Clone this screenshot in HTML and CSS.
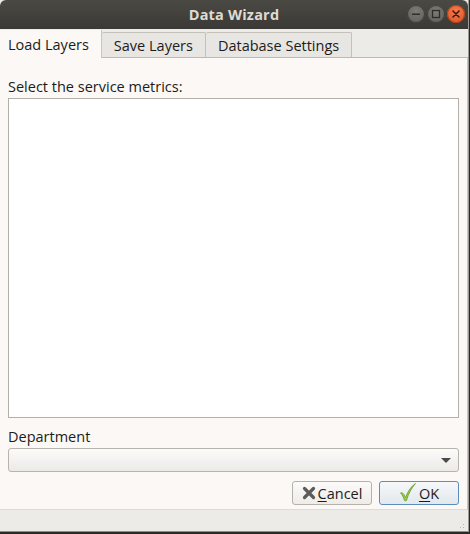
FILE: index.html
```html
<!DOCTYPE html>
<html>
<head>
<meta charset="utf-8">
<link rel="stylesheet" href="styles.css">
</head>
<body>
<div class="window">
  <div class="titlebar">
    <div class="title">Data Wizard</div>
    <div class="controls">
      <span class="ctl ctl-min"><svg width="16" height="16" viewBox="0 0 16 16"><rect x="4" y="7.5" width="8" height="1.5" fill="#2e2d2a"/></svg></span>
      <span class="ctl ctl-max"><svg width="16" height="16" viewBox="0 0 16 16"><rect x="4.5" y="4.5" width="7" height="7" fill="none" stroke="#2e2d2a" stroke-width="1.3"/></svg></span>
      <span class="ctl ctl-close"><svg width="16" height="16" viewBox="0 0 16 16"><path d="M5 5 L11 11 M11 5 L5 11" stroke="#3a1a0e" stroke-width="1.6" stroke-linecap="round"/></svg></span>
    </div>
  </div>
  <div class="tabbar">
    <div class="tab active">Load Layers</div>
    <div class="tab">Save Layers</div>
    <div class="tab">Database Settings</div>
  </div>
  <div class="panel">
    <div class="label label-top">Select the service metrics:</div>
    <div class="listbox"></div>
    <div class="label label-dept">Department</div>
    <div class="combo"><span class="arrow"></span></div>
    <div class="buttons">
      <button class="btn"><svg class="icon" width="14" height="14" viewBox="0 0 14 14"><path d="M2.5 2.5 L11.5 11.5 M11.5 2.5 L2.5 11.5" stroke="#5b5b58" stroke-width="3.2" stroke-linecap="round"/></svg><span><u>C</u>ancel</span></button>
      <button class="btn btn-default"><svg class="icon" width="18" height="20" viewBox="0 0 18 20"><path d="M1.5 11 C3 10 4.5 11 6.5 15.5 C9 9 12 4.5 16.5 1.5 C12.5 6 9.5 11.5 7.5 18.5 C6.5 19 6 19 5.5 18.5 C4.5 15 3 12.5 1.5 11 Z" fill="#9acb4c" stroke="#6a9a2c" stroke-width="0.8"/></svg><span><u>O</u>K</span></button>
    </div>
  </div>
  <div class="statusbar"><span class="grip"></span></div>
</div>
</body>
</html>
```

FILE: styles.css
```css
html, body {
  margin: 0;
  padding: 0;
}
body {
  width: 470px;
  height: 534px;
  background: #2b2a27;
  font-family: "Open Sans", "Noto Sans", sans-serif;
  font-size: 14.5px;
  color: #1c1c1c;
  overflow: hidden;
}
.window {
  width: 468px;
  height: 531px;
  display: flex;
  flex-direction: column;
  background: #edebe7;
  border-right: 1px solid #9d9a94;
  border-bottom: 1px solid #8f8c86;
}
.titlebar {
  height: 29px;
  flex: none;
  background: linear-gradient(#4a4943, #3a3935);
  border-radius: 6px 6px 0 0;
  position: relative;
  display: flex;
  align-items: center;
  justify-content: center;
}
.title {
  color: #dfdbd2;
  font-weight: bold;
  font-size: 14.5px;
  letter-spacing: 0.2px;
}
.controls {
  position: absolute;
  right: 3px;
  top: 5px;
  display: flex;
  gap: 2px;
}
.ctl {
  width: 18px;
  height: 18px;
  border-radius: 50%;
  display: flex;
  align-items: center;
  justify-content: center;
  background: radial-gradient(circle at 50% 35%, #7d7b75, #5c5b56);
  box-shadow: inset 0 0 0 1px #3e3d39;
}
.ctl-close {
  background: radial-gradient(circle at 50% 35%, #f57c4e, #df4d1c);
  box-shadow: inset 0 0 0 1px #b0401a;
}
.tabbar {
  height: 28px;
  flex: none;
  display: flex;
  align-items: flex-end;
  background: #edebe7;
  border-bottom: 1px solid #bdb9b3;
}
.tab {
  padding: 0 12px;
  display: flex;
  align-items: center;
  background: #e8e6e2;
  border: 1px solid #c4c0ba;
  border-bottom: none;
  border-left: none;
  border-radius: 2px 2px 0 0;
  color: #1c1c1c;
  box-sizing: border-box;
  height: 25px;
  padding-top: 1px;
}
.tab.active {
  height: 28px;
  margin-bottom: -1px;
  padding: 0 12px 0 8px;
  background: #fbf8f5;
  border-top: none;
  border-right: 1px solid #c9c5bf;
  border-radius: 0;
}
.panel {
  flex: 1;
  background: #fbf8f5;
  border-right: 1px solid #c8c4be;
  border-bottom: 1px solid #dedad5;
  padding: 0 8px 4px 8px;
  display: flex;
  flex-direction: column;
}
.label-top {
  margin-top: 18px;
  height: 22px;
  line-height: 22px;
}
.listbox {
  height: 320px;
  flex: none;
  background: #ffffff;
  border: 1px solid #b3afa9;
  box-sizing: border-box;
}
.label-dept {
  margin-top: 7px;
  height: 23px;
  line-height: 23px;
}
.combo {
  height: 24px;
  flex: none;
  box-sizing: border-box;
  border: 1px solid #b7b3ad;
  border-radius: 3px;
  background: linear-gradient(#fcfbfa, #eceae7);
  display: flex;
  align-items: center;
  justify-content: flex-end;
  padding-right: 7px;
}
.arrow {
  width: 0;
  height: 0;
  border-left: 5px solid transparent;
  border-right: 5px solid transparent;
  border-top: 5px solid #4a4945;
}
.buttons {
  margin-top: 9px;
  display: flex;
  justify-content: flex-end;
  gap: 7px;
}
.btn {
  height: 24px;
  width: 80px;
  box-sizing: border-box;
  border: 1px solid #b5b1ab;
  border-radius: 3px;
  background: linear-gradient(#fcfbfa, #eeece9);
  font-family: inherit;
  font-size: 14.5px;
  color: #1c1c1c;
  display: flex;
  align-items: center;
  justify-content: center;
  gap: 2px;
  padding: 0;
}
.btn u {
  text-decoration-thickness: 1px;
  text-underline-offset: 2px;
}
.btn-default {
  border-color: #5a8fbd;
  background: linear-gradient(#f6f8fa, #e3e8ed);
}
.btn-default .icon {
  margin-top: -3px;
}
.statusbar {
  flex: none;
  height: 21px;
  background: #edebe7;
  display: flex;
  justify-content: flex-end;
  align-items: flex-end;
}
.grip {
  width: 10px;
  height: 10px;
  margin: 0 2px 1px 0;
  background-image: radial-gradient(circle, #b9b5af 0.8px, transparent 1px);
  background-size: 3px 3px;
  clip-path: polygon(100% 0, 100% 100%, 0 100%);
}
```
